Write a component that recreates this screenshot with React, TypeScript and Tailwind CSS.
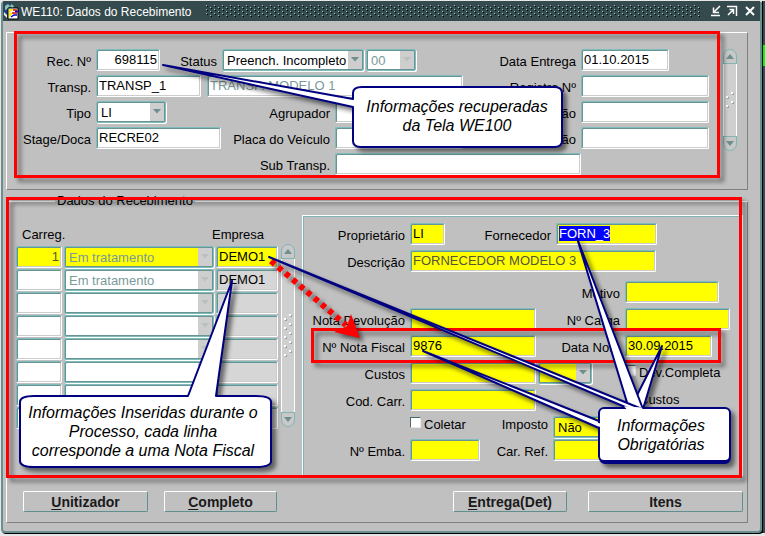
import React, { useEffect, useRef } from 'react';
import clsx from 'clsx';

interface FieldProps {
  id: string;
  label?: string;
  labelClass?: string;
  className?: string;
  value?: string;
  yellow?: boolean;
  gray?: boolean;
  muted?: boolean;
  inputRef?: React.Ref<HTMLInputElement>;
}

interface ComboProps {
  id: string;
  label?: string;
  labelClass?: string;
  className?: string;
  options?: string[];
  yellow?: boolean;
  muted?: boolean;
}

interface Row {
  carreg: string;
  status: string;
  empresa: string;
}

const BEVEL = "rounded-[2px] border border-t-[#7fbcbc] border-l-[#7fbcbc] border-r-white border-b-white shadow-[inset_1px_1px_0_#6a9393,inset_-1px_-1px_0_#cccccc]";

const rows: Row[] = [
  { carreg: "1", status: "Em tratamento", empresa: "DEMO1" },
  { carreg: "", status: "Em tratamento", empresa: "DEMO1" },
  { carreg: "", status: "", empresa: "" },
  { carreg: "", status: "", empresa: "" },
  { carreg: "", status: "", empresa: "" },
  { carreg: "", status: "", empresa: "" },
  { carreg: "", status: "", empresa: "" },
  { carreg: "", status: "", empresa: "" },
];

function Field({ id, label, labelClass, className, value = "", yellow, gray, muted, inputRef }: FieldProps) {
  return (
    <>
      {label && (
        <label htmlFor={id} className={clsx("shrink-0 pt-[5px] pr-[5px] text-right whitespace-nowrap", labelClass)}>
          {label}
        </label>
      )}
      <input
        id={id}
        ref={inputRef}
        type="text"
        aria-label={label ? undefined : id}
        defaultValue={value}
        className={clsx(
          "h-[22px] shrink-0 px-0.5 pb-px outline-none selection:bg-[#0000ff] selection:text-white",
          BEVEL,
          yellow ? "bg-[#ffff00]" : gray ? "bg-[#d6d6d6]" : "bg-white",
          muted && (yellow ? "text-[#55553a]" : "text-[#7a9a9a]"),
          className
        )}
      />
    </>
  );
}

function Combo({ id, label, labelClass, className, options = [""], yellow, muted }: ComboProps) {
  return (
    <>
      {label && (
        <label htmlFor={id} className={clsx("shrink-0 pt-[5px] pr-[5px] text-right whitespace-nowrap", labelClass)}>
          {label}
        </label>
      )}
      <div
        className={clsx(
          "relative flex h-[22px] shrink-0 rounded-[2px] border border-[#7fbcbc] pt-px shadow-[inset_1px_1px_0_#6a9393,inset_-1px_-1px_0_#6a9393,1px_1px_0_#ffffff]",
          yellow ? "bg-[#ffff00]" : "bg-white",
          className
        )}
      >
        <select
          id={id}
          aria-label={label ? undefined : id}
          className={clsx("w-full appearance-none pl-1 outline-none", muted ? "text-[#7a9a9a]" : "text-black")}
        >
          {options.map((o) => (
            <option key={o}>{o}</option>
          ))}
        </select>
        <span className="pointer-events-none absolute inset-y-px right-px flex w-3.5 justify-center bg-[#cecece] pt-1.5">
          <svg width="8" height="5" viewBox="0 0 8 5">
            <path d="M0 0H8L4 4.5Z" fill={muted ? "#b8c0c0" : "#6f8f8f"} />
          </svg>
        </span>
      </div>
    </>
  );
}

function Check({ id, label, className }: { id: string; label: string; className?: string }) {
  return (
    <div className={clsx("flex shrink-0 items-start gap-[3px]", className)}>
      <input
        id={id}
        type="checkbox"
        className="mt-px size-[11px] appearance-none border border-t-[#4a6a6a] border-l-[#4a6a6a] border-r-[#e8e8e8] border-b-[#e8e8e8] bg-white"
      />
      <label htmlFor={id} className="pt-px whitespace-nowrap">{label}</label>
    </div>
  );
}

function ScrollBar({ className, dots }: { className?: string; dots: number }) {
  return (
    <div className={clsx("flex w-3.5 shrink-0 flex-col", className)}>
      <button type="button" aria-label="Subir" className="flex h-[15px] items-center justify-center rounded-t-full border border-[#7fb5b5] bg-[#c8c8c8]">
        <svg width="8" height="5" viewBox="0 0 8 5"><path d="M0 5H8L4 0Z" fill="#6f8f8f" /></svg>
      </button>
      <div className="flex flex-1 flex-col items-center justify-center border-x border-white bg-[#cfcfcf]">
        {Array.from({ length: dots }, (_, i) => (
          <svg key={i} width="10" height="9" viewBox="0 0 10 9">
            <path d="M1 5h2v2H1zM6 1h2v2H6z" fill="#fff" />
            <path d="M3 6h1v2H2V7h1zM8 2h1v2H7V3h1z" fill="#8aa8a8" />
          </svg>
        ))}
      </div>
      <button type="button" aria-label="Descer" className="flex h-[15px] items-center justify-center rounded-b-full border border-[#7fb5b5] bg-[#c8c8c8]">
        <svg width="8" height="5" viewBox="0 0 8 5"><path d="M0 0H8L4 5Z" fill="#6f8f8f" /></svg>
      </button>
    </div>
  );
}

function ActionButton({ hotkey, text, className }: { hotkey?: string; text: string; className?: string }) {
  return (
    <button
      type="button"
      className={clsx(
        "h-[21px] shrink-0 rounded-[2px] border border-t-white border-l-white border-r-[#5f8f8f] border-b-[#5f8f8f] text-[14px] leading-[18px] font-bold text-[#1a1a1a]",
        className
      )}
    >
      {hotkey && <span className="underline underline-offset-2">{hotkey}</span>}
      {text}
    </button>
  );
}

function TitleBar() {
  return (
    <header className="flex h-5 items-center bg-[#354a4c] pr-1 text-white">
      <svg width="16" height="17" viewBox="0 0 16 17" className="shrink-0">
        <circle cx="6" cy="6" r="5.5" fill="#1c3f94" />
        <path d="M2 3l3-2 2 2-2 3-3 1zM8 1l3 2-1 2-3-1z" fill="#8fc7a0" />
        <path d="M1 9l3 3v3L1 12z" fill="#e8e8e8" />
        <path d="M5 5h10v11H5z" fill="#fff" stroke="#000" />
        <path d="M6 6h4l-3 4h3l-4 5V6z" fill="#ffe800" />
        <path d="M10 7h4M9 10h5" stroke="#e00000" strokeWidth="1.5" />
        <path d="M12 8.500h3M8 14l3-2h3" stroke="#0000d0" strokeWidth="1.500" fill="none" />
      </svg>
      <h1 className="ml-0.5 shrink-0 pt-0.5 text-[12px] leading-[18px]">WE110: Dados do Recebimento</h1>
      <svg className="ml-3.5 h-3 min-w-0 flex-1">
        <defs>
          <pattern id="grip" width="8" height="8" patternUnits="userSpaceOnUse">
            <path d="M0 0h1v1H0zM4 2h1v1H4zM0 4h1v1H0zM4 6h1v1H4z" fill="#8fd0d0" />
            <path d="M1 1h1v1H1zM5 3h1v1H5zM1 5h1v1H1zM5 7h1v1H5z" fill="#000" />
          </pattern>
        </defs>
        <rect width="100%" height="12" fill="url(#grip)" />
      </svg>
      <div className="ml-2 flex shrink-0 gap-1">
        <button type="button" aria-label="Minimizar">
          <svg width="12" height="12" viewBox="0 0 12 12" fill="none" stroke="#fff" strokeWidth="1.500">
            <path d="M10 1L4 7M3.500 2.500V7.500H9M1 10.500H10" />
          </svg>
        </button>
        <button type="button" aria-label="Maximizar">
          <svg width="12" height="12" viewBox="0 0 12 12" fill="none" stroke="#fff" strokeWidth="1.500">
            <path d="M1 1.500H10.500V11M2 10L7.500 4.500M3.500 4.500H7.500V9" />
          </svg>
        </button>
        <button type="button" aria-label="Fechar" className="ml-0.5">
          <svg width="12" height="12" viewBox="0 0 12 12" fill="none" stroke="#fff" strokeWidth="2">
            <path d="M2 2L10 10M10 2L2 10" />
          </svg>
        </button>
      </div>
    </header>
  );
}

function ReceiptPanel() {
  return (
    <section className="mt-[11px] flex border border-t-white border-l-white border-r-[#808080] border-b-[#808080] pt-4 pr-2.5 pb-3.5">
      <div className="flex min-w-0 flex-1 flex-col gap-1">
        <div className="flex">
          <Field id="rec" label="Rec. Nº" labelClass="w-[89px]" className="w-16 text-right" value="698115" />
          <Combo id="status" label="Status" labelClass="w-[62px]" className="w-[142px]" options={["Preench. Incompleto"]} />
          <Combo id="codigo" className="ml-0.5 w-[50px]" options={["00"]} muted />
          <div className="ml-auto flex w-[228px]">
            <Field id="entrega" label="Data Entrega" labelClass="w-[100px]" className="w-[88px]" value="01.10.2015" />
          </div>
        </div>
        <div className="flex">
          <Field id="transp" label="Transp." labelClass="w-[89px]" className="w-[105px]" value="TRANSP_1" />
          <Field id="transp-nome" className="ml-1.5 w-64" value="TRANSP. MODELO 1" muted />
          <div className="ml-auto flex w-[228px]">
            <Field id="registro" label="Registro Nº" labelClass="w-[100px]" className="w-32" />
          </div>
        </div>
        <div className="flex">
          <Combo id="tipo" label="Tipo" labelClass="w-[89px]" className="w-[70px]" options={["LI"]} />
          <Field id="agrupador" label="Agrupador" labelClass="w-[169px]" className="w-32" />
          <div className="ml-auto flex w-[228px]">
            <Field id="acao" label="Ação" labelClass="w-[100px]" className="w-32" />
          </div>
        </div>
        <div className="flex">
          <Field id="doca" label="Stage/Doca" labelClass="w-[89px]" className="w-[125px]" value="RECRE02" />
          <Field id="placa" label="Placa do Veículo" labelClass="w-[114px]" className="w-32" />
          <div className="ml-auto flex w-[228px]">
            <Field id="operacao" label="Operação" labelClass="w-[100px]" className="w-32" />
          </div>
        </div>
        <div className="flex">
          <Field id="sub" label="Sub Transp." labelClass="w-[328px]" className="w-[246px]" />
        </div>
      </div>
      <ScrollBar className="ml-3.5 h-[102px]" dots={2} />
    </section>
  );
}

function LoadTable() {
  return (
    <table className="w-[266px] shrink-0 table-fixed border-separate self-start border-spacing-x-[2px] border-spacing-y-px">
      <colgroup>
        <col className="w-[46px]" />
        <col className="w-[150px]" />
        <col className="w-[62px]" />
      </colgroup>
      <thead>
        <tr className="h-5">
          <th className="p-0 pl-1.5 text-left font-normal whitespace-nowrap">Carreg.</th>
          <th colSpan={2} className="p-0 pr-3.5 text-right font-normal">Empresa</th>
        </tr>
      </thead>
      <tbody>
        {rows.map((r, i) => (
          <tr key={i} className="h-[22px]">
            <td className="p-0">
              <Field id={`carreg-${i}`} className="block w-full text-right" value={r.carreg} yellow={i === 0} muted={i === 0} />
            </td>
            <td className="p-0">
              <Combo id={`situacao-${i}`} className="w-full" options={[r.status]} yellow={i === 0} muted />
            </td>
            <td className="p-0">
              <Field id={`empresa-${i}`} className="block w-full" value={r.empresa} yellow={i === 0} gray={i > 0} />
            </td>
          </tr>
        ))}
      </tbody>
    </table>
  );
}

function InvoicePanel() {
  const supplierRef = useRef<HTMLInputElement>(null);

  useEffect(() => {
    supplierRef.current?.focus();
    supplierRef.current?.select();
  }, []);

  return (
    <section className="mt-1.5 ml-[7px] flex min-w-0 flex-1 flex-col gap-[5px] self-start overflow-hidden border border-white pt-[7px] pb-3.5 shadow-[inset_1px_1px_0_#7fb5b5]">
      <div className="flex">
        <Field id="proprietario" label="Proprietário" labelClass="w-[107px]" className="w-[35px]" value="LI" yellow />
        <Field id="fornecedor" label="Fornecedor" labelClass="w-[111px]" className="w-[101px]" value="FORN_3" yellow inputRef={supplierRef} />
      </div>
      <div className="flex">
        <Field id="descricao" label="Descrição" labelClass="w-[107px]" className="w-[246px]" value="FORNECEDOR MODELO 3" yellow muted />
      </div>
      <div className="mt-1 flex">
        <Field id="motivo" label="Motivo" labelClass="w-[322px]" className="w-[94px]" yellow />
      </div>
      <div className="flex">
        <Field id="devolucao" label="Nota Devolução" labelClass="w-[107px]" className="w-[126px]" yellow />
        <Field id="carga" label="Nº Carga" labelClass="w-[89px]" className="w-[105px]" yellow />
      </div>
      <div className="flex">
        <Field id="nota" label="Nº Nota Fiscal" labelClass="w-[107px]" className="w-[126px]" value="9876" yellow />
        <Field id="data-nota" label="Data Nota" labelClass="w-[89px]" className="w-[87px]" value="30.09.2015" yellow />
      </div>
      <div className="flex">
        <Field id="custos" label="Custos" labelClass="w-[107px]" className="w-[126px]" yellow />
        <Combo id="moeda" className="ml-0.5 w-[54px]" yellow />
        <Check id="dev" label="Dev.Completa" className="ml-[33px] pt-0.5" />
      </div>
      <div className="flex">
        <Field id="carr" label="Cod. Carr." labelClass="w-[107px]" className="w-[126px]" yellow />
        <Check id="custos-check" label="Custos" className="ml-[89px] pt-0.5" />
      </div>
      <div className="flex h-[18px]">
        <Check id="coletar" label="Coletar" className="ml-[107px] w-[70px]" />
        <Combo id="imposto" label="Imposto" labelClass="w-[73px] -mt-1" className="w-20" options={["Não"]} yellow />
      </div>
      <div className="flex">
        <Field id="emba" label="Nº Emba." labelClass="w-[107px]" className="w-[70px]" yellow />
        <Field id="ref" label="Car. Ref." labelClass="w-[73px]" className="w-[100px]" yellow />
      </div>
    </section>
  );
}

function Annotations() {
  return (
    <div className="pointer-events-none absolute top-0 left-0 h-[536px] w-[765px]">
      <div className="absolute top-[31px] left-[14px] h-[147px] w-[706px] border-3 border-[#ff0000] drop-shadow-[4px_4px_2px_rgba(0,0,0,0.45)]" />
      <div className="absolute top-[197px] left-[6px] h-[281px] w-[736px] border-3 border-[#ff0000] drop-shadow-[4px_4px_2px_rgba(0,0,0,0.45)]" />
      <div className="absolute top-[328px] left-[311px] h-[35px] w-[410px] border-3 border-[#ff0000] drop-shadow-[4px_4px_2px_rgba(0,0,0,0.45)]" />
      <svg className="absolute inset-0 drop-shadow-[4px_4px_2px_rgba(0,0,0,0.5)]" width="765" height="536" viewBox="0 0 765 536" strokeLinejoin="round">
        <path d="M271 261L346 325" stroke="#ff0000" strokeWidth="6" strokeDasharray="5 4.500" />
        <path d="M360 338L334 332L347 326L351 314Z" fill="#ff0000" />
        <g fill="#fff" stroke="#000080" strokeWidth="2">
          <path d="M362 87H554Q562 87 562 93V141Q562 147 554 147H361Q353 147 353 141V107L163 65L353 99V93Q353 87 362 87Z" />
          <path d="M34 396H188L232 281L216 396H256Q271 396 271 402V461Q271 467 256 467H34Q20 467 20 461V402Q20 396 34 396Z" />
          <path d="M599 421L423 351L599 428Z" />
          <path d="M643 409L662 346L630 409Z" />
          <path d="M643 409L577 238L629 409Z" />
          <path d="M642 409L269 257L630 409Z" />
          <rect x="600" y="409" width="130" height="54" rx="5" fill="#000080" />
          <rect x="599" y="408" width="131" height="53" rx="5" />
        </g>
        <path d="M628 411L624 406.200L642 407.500L643 411ZM597 422.500L602 424V427.500L597 426Z" fill="#fff" />
      </svg>
      <p className="absolute top-[97px] left-[352px] w-[210px] text-center text-[16px] leading-[19px] italic">
        Informações recuperadas<br />da Tela WE100
      </p>
      <p className="absolute top-[403px] left-[17px] w-[252px] text-center text-[16px] leading-[19px] italic">
        Informações Inseridas durante o<br />Processo, cada linha<br />corresponde a uma Nota Fiscal
      </p>
      <p className="absolute top-[416px] left-[595px] w-[132px] text-center text-[16px] leading-[19px] italic">
        Informações<br />Obrigatórias
      </p>
    </div>
  );
}

export default function App() {
  return (
    <div className="relative flex overflow-hidden bg-[#e6e6e6] pt-px pb-[3px] pl-px font-['Liberation_Sans',Arial,sans-serif] text-[13px] leading-4 text-black">
      <main className="min-w-0 flex-1 rounded border-x-2 border-b-2 border-[#6b8e8e] bg-[#c0c0c0] shadow-[1px_1px_0_#000]">
        <TitleBar />
        <div className="pr-3 pb-2 pl-[3px]">
          <ReceiptPanel />
          <fieldset className="mt-[3px] min-w-0 border border-t-white border-l-white border-r-[#808080] border-b-[#808080]">
            <legend className="ml-12 px-0.5 leading-4">Dados do Recebimento</legend>
            <div className="flex pr-1 pl-[7px]">
              <div className="flex shrink-0 pt-[15px]">
                <LoadTable />
                <ScrollBar className="ml-px mt-5 h-[183px]" dots={5} />
              </div>
              <InvoicePanel />
            </div>
            <div className="mt-[15px] flex pr-1 pb-2.5 pl-4">
              <ActionButton hotkey="U" text="nitizador" className="w-[125px]" />
              <ActionButton hotkey="C" text="ompleto" className="ml-4 w-[113px]" />
              <ActionButton hotkey="E" text="ntrega(Det)" className="ml-auto w-[114px]" />
              <ActionButton text="Itens" className="ml-[21px] w-[155px]" />
            </div>
          </fieldset>
        </div>
      </main>
      {/* sliver of the parent window */}
      <div className="flex w-[3px] shrink-0 flex-col border-l border-black bg-[#2f4f4f]">
        <div className="h-11" />
        <div className="h-[21px] bg-[#00ff00]" />
      </div>
      <Annotations />
    </div>
  );
}
